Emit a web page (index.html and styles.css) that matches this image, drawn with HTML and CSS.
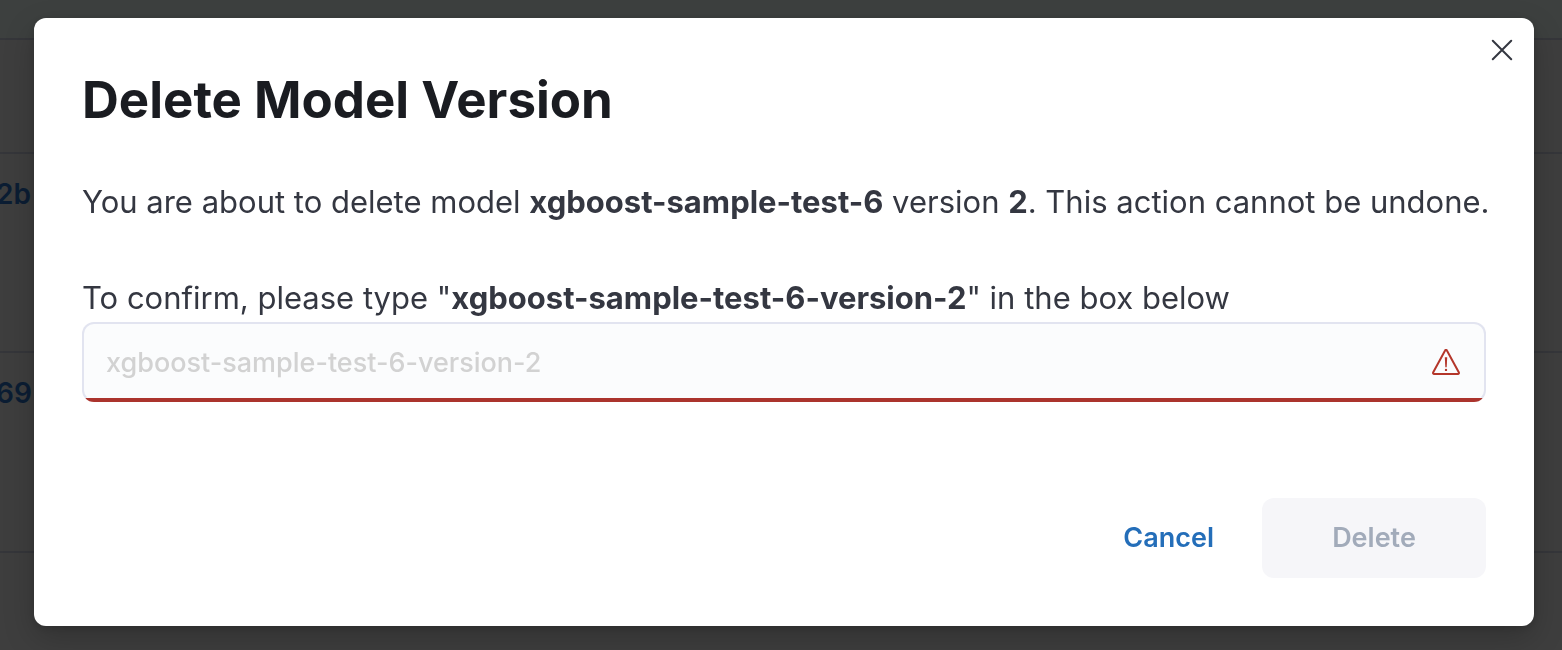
FILE: index.html
```
<!DOCTYPE html>
<html lang="en">
<head>
<meta charset="utf-8">
<meta name="viewport" content="width=device-width, initial-scale=1">
<title>Delete Model Version</title>
<link rel="stylesheet" href="styles.css">
</head>
<body>
<main class="page">
  <div class="row row-head"></div>
  <div class="row row-short"></div>
  <div class="row"><a class="row-link" href="#">2b</a></div>
  <div class="row"><a class="row-link" href="#">69</a></div>
  <div class="row row-last"></div>
</main>
<div class="overlay">
  <section class="modal" role="dialog" aria-modal="true" aria-labelledby="modal-title">
    <button class="close" type="button" aria-label="Close">
      <svg class="close-icon" viewBox="0 0 20 20" aria-hidden="true"><path d="M.8.8 19.2 19.2M19.2.8.8 19.2"/></svg>
    </button>
    <h1 class="title" id="modal-title">Delete Model Version</h1>
    <form class="form">
      <p class="text">You are about to delete model <strong>xgboost-sample-test-6</strong> version <strong>2</strong>. This action cannot be undone.</p>
      <label class="text" for="confirm">To confirm, please type "<strong>xgboost-sample-test-6-version-2</strong>" in the box below</label>
      <div class="field">
        <input class="input" id="confirm" type="text" placeholder="xgboost-sample-test-6-version-2" aria-invalid="true">
        <svg class="warning" viewBox="0 0 28 26" aria-hidden="true">
          <path class="warning-outline" d="M13.1 1.5a1 1 0 0 1 1.8 0L26.9 23.6a1 1 0 0 1-.9 1.4H2a1 1 0 0 1-.9-1.4Z"/>
          <path class="warning-mark" d="M12.8 8.2h2.4l-.5 10h-1.4Z"/>
          <circle class="warning-mark" cx="14" cy="20.9" r="1.2"/>
        </svg>
      </div>
      <div class="actions">
        <button class="button button-text" type="button">Cancel</button>
        <button class="button button-fill" type="submit" disabled>Delete</button>
      </div>
    </form>
  </section>
</div>
</body>
</html>
```
FILE: styles.css
```
* { box-sizing: border-box; }
body {
  margin: 0;
  font-family: Inter, "Liberation Sans", sans-serif;
  color: #343741;
  background: #3e3e3e;
}
.page {
  display: flex;
  flex-direction: column;
  height: 100vh;
  overflow: hidden;
}
.row {
  flex: none;
  height: 200px;
  padding-top: 24px;
  border-bottom: 2px solid #35363a;
}
.row-head { height: 40px; background: #3d403f; }
.row-short { height: 114px; }
.row:nth-child(3) { height: 199px; }
.row-last { flex: 1; border-bottom: 0; }
.row-link {
  margin-left: -4px;
  color: #0b1d33;
  font-size: 28px;
  font-weight: 600;
  line-height: 32px;
  text-decoration: none;
}
.overlay {
  position: fixed;
  inset: 0;
  padding: 18px 28px 24px 34px;
}
.modal {
  position: relative;
  padding: 48px;
  border-radius: 12px;
  background: #fff;
  box-shadow: 0 12px 32px rgba(0, 0, 0, .2), 0 2px 8px rgba(0, 0, 0, .15);
}
.close {
  position: absolute;
  top: 8px;
  right: 8px;
  display: grid;
  place-items: center;
  width: 48px;
  height: 48px;
  padding: 0;
  border: 0;
  background: none;
}
.close-icon {
  width: 20px;
  height: 20px;
  overflow: visible;
  fill: none;
  stroke: #343741;
  stroke-width: 2;
  stroke-linecap: round;
}
.title {
  margin: 0 0 44px;
  color: #1a1c21;
  font-size: 51px;
  font-weight: 700;
  line-height: 68px;
}
.form { display: flex; flex-direction: column; }
.text {
  margin: 0 -16px 0 0;
  font-size: 31px;
  line-height: 48px;
}
p.text { margin-bottom: 48px; }
.text strong { font-weight: 700; }
.field { display: grid; align-items: center; }
.input {
  grid-area: 1 / 1;
  width: 100%;
  height: 80px;
  padding: 0 80px 0 22px;
  border: 2px solid #e2e4f0;
  border-radius: 12px;
  background: linear-gradient(#ab342d, #ab342d) bottom / 100% 4px no-repeat border-box, #fbfcfd;
  border-bottom-color: transparent;
  color: #343741;
  font: 500 27px/40px Inter, "Liberation Sans", sans-serif;
}
.input::placeholder { color: #d2d2d2; opacity: 1; }
.warning {
  grid-area: 1 / 1;
  justify-self: end;
  width: 28px;
  height: 26px;
  margin-right: 26px;
}
.warning-outline { fill: none; stroke: #b4362a; stroke-width: 2; stroke-linejoin: round; }
.warning-mark { fill: #b4362a; }
.actions {
  display: flex;
  justify-content: flex-end;
  gap: 32px;
  margin-top: 96px;
}
.button {
  height: 80px;
  padding: 0 16px;
  border: 0;
  border-radius: 12px;
  font: 600 27px/40px Inter, "Liberation Sans", sans-serif;
}
.button-text { background: none; color: #246eb9; }
.button-fill { min-width: 224px; background: #f6f6f9; color: #a2abba; }
```
